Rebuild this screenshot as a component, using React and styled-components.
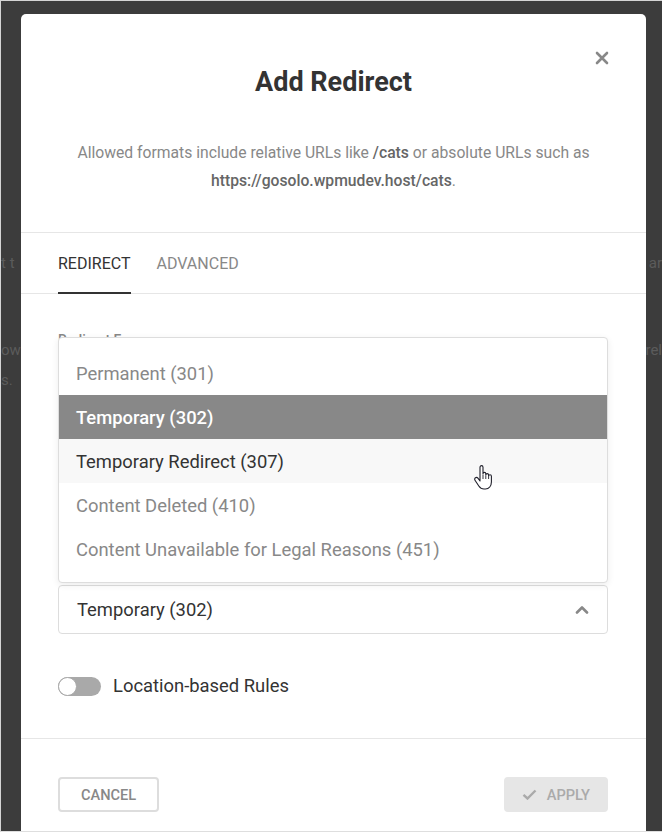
import React from 'react';
import styled, { createGlobalStyle } from 'styled-components';

const GlobalStyle = createGlobalStyle`
    * {
        box-sizing: border-box;
    }
    body {
        margin: 0;
        font-family: Roboto, 'Liberation Sans', Arial, sans-serif;
        -webkit-font-smoothing: antialiased;
    }
`;

const Frame = styled.div`
    position: relative;
    width: 662px;
    height: 832px;
    overflow: hidden;
    background: #3c3c3c;
    border-top: 1px solid #d4d4d4;
    border-left: 1px solid #d4d4d4;
    border-bottom: 1px solid #dedede;
`;

// what's left of the page behind the overlay
const PageBehind = styled.div`
    padding-top: 251px;
    color: #5b5b5b;
    font-size: 15px;
    line-height: 22px;
`;

const PageRow = styled.div`
    display: flex;
    justify-content: space-between;
    margin-bottom: ${(p) => p.gap || 0}px;
`;

const Modal = styled.div`
    position: absolute;
    left: 20px;
    top: 13px;
    width: 625px;
    background: #fff;
    border-radius: 5px;
`;

const Header = styled.div`
    position: relative;
    padding: 50px 38px 37px;
    text-align: center;
    border-bottom: 1px solid #e6e6e6;
`;

const CloseButton = styled.button`
    position: absolute;
    top: 36px;
    right: 36px;
    width: 16px;
    height: 16px;
    padding: 0;
    border: none;
    background: none;
    display: flex;
    align-items: center;
    justify-content: center;
    cursor: pointer;
`;

const Title = styled.h3`
    margin: 0;
    font-size: 27px;
    line-height: 36px;
    font-weight: 700;
    color: #333;
`;

const Description = styled.p`
    margin: 39px 0 0;
    font-size: 15.7px;
    line-height: 28px;
    color: #888;
    strong {
        font-weight: 500;
        color: #666;
    }
`;

const Tabs = styled.div`
    display: flex;
    gap: 26px;
    padding: 0 37px;
    border-bottom: 1px solid #e6e6e6;
`;

const Tab = styled.div`
    height: 61px;
    display: flex;
    align-items: center;
    font-size: 16px;
    font-weight: 400;
    text-transform: uppercase;
    color: ${(p) => (p.active ? '#333' : '#888')};
    border-bottom: 2px solid ${(p) => (p.active ? '#333' : 'transparent')};
    margin-bottom: -1px;
    padding-top: 1px;
`;

const Body = styled.div`
    padding: 37px 38px 41px 37px;
    border-bottom: 1px solid #e6e6e6;
`;

const Field = styled.div`
    margin-bottom: 39px;
`;

const Label = styled.label`
    display: block;
    font-size: 14px;
    line-height: 18px;
    font-weight: 500;
    color: #888;
    margin-bottom: 8px;
`;

const Input = styled.div`
    height: 49px;
    border: 1px solid #ddd;
    border-radius: 4px;
`;

const SelectWrap = styled.div`
    position: relative;
`;

const SelectBox = styled.div`
    height: 49px;
    display: flex;
    align-items: center;
    justify-content: space-between;
    padding: 0 18px 0 18px;
    border: 1px solid #ddd;
    border-radius: 4px;
    font-size: 18.4px;
    color: #333;
    background: #fff;
`;

const Dropdown = styled.ul`
    position: absolute;
    left: 0;
    right: 0;
    bottom: calc(100% + 2px);
    margin: 0;
    padding: 13px 0 11px;
    list-style: none;
    background: #fff;
    border: 1px solid #ddd;
    border-radius: 4px;
    box-shadow: 0 2px 7px rgba(0, 0, 0, 0.08);
    z-index: 2;
`;

const Option = styled.li`
    position: relative;
    height: 44px;
    display: flex;
    align-items: center;
    padding: 0 17px;
    font-size: 18.4px;
    font-weight: ${(p) => (p.selected ? 500 : 400)};
    color: ${(p) => (p.selected ? '#fff' : p.hover ? '#333' : '#888')};
    background: ${(p) => (p.selected ? '#888' : p.hover ? '#f8f8f8' : 'transparent')};
`;

const Pointer = styled.svg`
    position: absolute;
    left: 414px;
    top: 26px;
`;

const ToggleRow = styled.div`
    margin-top: 41px;
    display: flex;
    align-items: center;
    gap: 12px;
    font-size: 18.4px;
    line-height: 22px;
    color: #333;
`;

const Track = styled.span`
    position: relative;
    width: 43px;
    height: 19px;
    border-radius: 10px;
    background: #a9a9a9;
`;

const Knob = styled.span`
    position: absolute;
    left: 0;
    top: 0;
    width: 19px;
    height: 19px;
    border-radius: 50%;
    background: #fff;
    border: 1px solid #a9a9a9;
`;

const Footer = styled.div`
    display: flex;
    justify-content: space-between;
    padding: 38px 38px 30px 37px;
`;

const Button = styled.button`
    height: 35px;
    display: flex;
    align-items: center;
    gap: 10px;
    padding: 0 ${(p) => (p.ghost ? 21 : 16)}px;
    border-radius: 4px;
    border: 2px solid ${(p) => (p.ghost ? '#ddd' : '#e6e6e6')};
    background: ${(p) => (p.ghost ? '#fff' : '#e6e6e6')};
    color: ${(p) => (p.ghost ? '#888' : '#aaa')};
    font-family: inherit;
    font-size: 14.6px;
    font-weight: 500;
    text-transform: uppercase;
`;

const options = [
    'Permanent (301)',
    'Temporary (302)',
    'Temporary Redirect (307)',
    'Content Deleted (410)',
    'Content Unavailable for Legal Reasons (451)',
];

export default function App() {
    return (
        <Frame>
            <GlobalStyle />
            <PageBehind>
                <PageRow gap={65}>
                    <span>t t</span>
                    <span>ar</span>
                </PageRow>
                <PageRow gap={8}>
                    <span>ow</span>
                    <span>rel</span>
                </PageRow>
                <PageRow>
                    <span>s.</span>
                </PageRow>
            </PageBehind>

            <Modal>
                <Header>
                    <CloseButton aria-label="Close">
                        <svg width="14" height="14" viewBox="0 0 14 14">
                            <path
                                d="M2 2 L12 12 M12 2 L2 12"
                                stroke="#888"
                                strokeWidth="2.6"
                                strokeLinecap="round"
                            />
                        </svg>
                    </CloseButton>
                    <Title>Add Redirect</Title>
                    <Description>
                        Allowed formats include relative URLs like{' '}
                        <strong>/cats</strong> or absolute URLs such as{' '}
                        <strong>https://gosolo.wpmudev.host/cats</strong>.
                    </Description>
                </Header>

                <Tabs>
                    <Tab active>Redirect</Tab>
                    <Tab>Advanced</Tab>
                </Tabs>

                <Body>
                    <Field>
                        <Label>Redirect From</Label>
                        <Input />
                    </Field>
                    <Field>
                        <Label>Redirect To</Label>
                        <Input />
                    </Field>
                    <Label>Redirect Type</Label>
                    <SelectWrap>
                        <Dropdown>
                            {options.map((o, i) => (
                                <Option key={o} selected={i === 1} hover={i === 2}>
                                    {o}
                                    {i === 2 && (
                                        <Pointer width="20" height="25" viewBox="0 0 20 25">
                                            <path
                                                d="M7 2.2 C7 1.3 7.7 0.6 8.5 0.6 C9.3 0.6 10 1.3 10 2.2 V8.8 C10 8 10.6 7.4 11.4 7.4 C12.2 7.4 12.8 8 12.8 8.8 V10 C12.8 9.2 13.4 8.6 14.2 8.6 C15 8.6 15.6 9.2 15.6 10 V11.2 C15.6 10.4 16.2 9.8 17 9.8 C17.8 9.8 18.4 10.4 18.4 11.2 V17 C18.4 21 16 24 12.5 24 H11 C8.5 24 7 22.8 5.8 21 L2 15.2 C1.4 14.3 1.7 13.2 2.5 12.7 C3.3 12.2 4.3 12.4 4.9 13.2 L7 16 Z"
                                                fill="#fff"
                                                stroke="#1f1f2a"
                                                strokeWidth="1.1"
                                                strokeLinejoin="round"
                                            />
                                            <path
                                                d="M10 9.5 V14 M12.8 10.5 V14 M15.6 11.5 V14"
                                                stroke="#1f1f2a"
                                                strokeWidth="0.9"
                                            />
                                        </Pointer>
                                    )}
                                </Option>
                            ))}
                        </Dropdown>
                        <SelectBox>
                            <span>Temporary (302)</span>
                            <svg width="14" height="9" viewBox="0 0 14 9">
                                <path
                                    d="M2 7.5 L7 2.5 L12 7.5"
                                    fill="none"
                                    stroke="#888"
                                    strokeWidth="2.6"
                                    strokeLinecap="round"
                                    strokeLinejoin="round"
                                />
                            </svg>
                        </SelectBox>
                    </SelectWrap>

                    <ToggleRow>
                        <Track>
                            <Knob />
                        </Track>
                        Location-based Rules
                    </ToggleRow>
                </Body>

                <Footer>
                    <Button ghost>Cancel</Button>
                    <Button>
                        <svg width="15" height="11" viewBox="0 0 15 11">
                            <path
                                d="M1.5 5.8 L5.5 9.5 L13.5 1.5"
                                fill="none"
                                stroke="#aaa"
                                strokeWidth="2.4"
                            />
                        </svg>
                        Apply
                    </Button>
                </Footer>
            </Modal>
        </Frame>
    );
}
